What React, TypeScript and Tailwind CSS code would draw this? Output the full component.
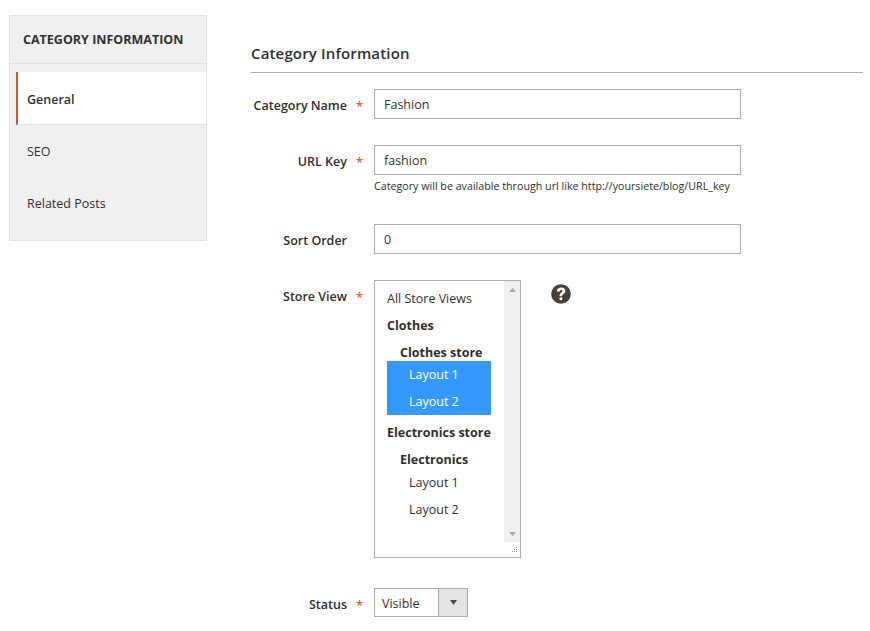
import React from 'react'

const font = { fontFamily: '"Open Sans", sans-serif' }

const FieldLabel = ({ text, required = true }: { text: string; required?: boolean }) => (
    <div className="flex w-[123px] shrink-0 justify-end pt-[4px] text-[12.5px] font-semibold leading-[18px] whitespace-nowrap text-[#303030]">
        <span>{text}</span>
        <span className={`w-[27px] pl-[9px] text-[13px] ${required ? 'text-[#e0633a]' : 'text-transparent'}`}>*</span>
    </div>
)

const TextInput = ({ value }: { value: string }) => (
    <div className="flex h-[30px] w-[367px] items-center border border-[#adadad] pt-[2px] pl-[9px] text-[12.5px] text-[#303030]">
        {value}
    </div>
)

const Group = ({ text, indent }: { text: string; indent: string }) => (
    <div className={`h-[27px] text-[12.5px] font-bold leading-[27px] whitespace-nowrap text-[#303030] ${indent}`}>{text}</div>
)

const Sidebar = () => (
    <aside className="flex h-[226px] w-[198px] shrink-0 flex-col border border-[#e3e3e3] bg-[#f0f0f0]">
        <div className="flex h-[48px] shrink-0 items-center border-b border-[#e3e3e3] pt-[2px] pl-[13px] text-[12.5px] font-bold whitespace-nowrap text-[#303030]">
            CATEGORY INFORMATION
        </div>
        <div className="mt-[8px] ml-[6px] flex h-[53px] shrink-0 items-center border-l-[2px] border-b border-l-[#d2581f] border-b-[#e3e3e3] bg-white pt-[4px] pl-[9px] text-[12.5px] font-semibold text-[#303030]">
            General
        </div>
        <div className="flex h-[52px] shrink-0 items-center pt-[2px] pl-[17px] text-[12.5px] text-[#303030]">SEO</div>
        <div className="flex h-[52px] shrink-0 items-center pt-[2px] pl-[17px] text-[12.5px] text-[#303030]">Related Posts</div>
    </aside>
)

const StoreList = () => (
    <div className="relative flex h-[278px] w-[147px] border border-[#adadad] bg-white">
        <div className="w-[129px] pt-[4px] pl-[12px] text-[12.5px] text-[#303030]">
            <div className="h-[27px] leading-[27px]">All Store Views</div>
            <Group text="Clothes" indent="" />
            <div className="h-[22px]">
                <Group text="Clothes store" indent="pl-[13px]" />
            </div>
            <div className="h-[54px] w-[104px] bg-[#3399ff] pl-[22px] leading-[27px] text-white">
                <div>Layout 1</div>
                <div>Layout 2</div>
            </div>
            <div className="h-[4px]" />
            <Group text="Electronics store" indent="" />
            <div className="h-[23px]">
                <Group text="Electronics" indent="pl-[13px]" />
            </div>
            <div className="pl-[22px] leading-[27px]">
                <div>Layout 1</div>
                <div>Layout 2</div>
            </div>
        </div>
        <div className="flex h-[261px] w-[16px] flex-col items-center justify-between bg-[#f0f0f0] pt-[7px] pb-[6px]">
            <svg width="7" height="4" viewBox="0 0 7 4"><path d="M3.5 0L7 4H0z" fill="#a8a8a8" /></svg>
            <svg width="7" height="4" viewBox="0 0 7 4"><path d="M3.5 4L7 0H0z" fill="#a8a8a8" /></svg>
        </div>
        <svg className="absolute right-[1px] bottom-[1px]" width="10" height="10" viewBox="0 0 10 10">
            <g fill="#9a9a9a">
                <rect x="7" y="1" width="1" height="1" />
                <rect x="5" y="3" width="1" height="1" />
                <rect x="7" y="3" width="1" height="1" />
                <rect x="3" y="5" width="1" height="1" />
                <rect x="5" y="5" width="1" height="1" />
                <rect x="7" y="5" width="1" height="1" />
            </g>
        </svg>
    </div>
)

const App = () => {
    return (
        <div className="flex h-[631px] w-[870px] overflow-hidden bg-white pt-[15px] pl-[9px]" style={font}>
            <Sidebar />
            <main className="ml-[44px] w-[612px]">
                <h2 className="mt-[28px] h-[30px] border-b border-[#adadad] text-[15px] leading-[20px] font-semibold tracking-[0.15px] text-[#303030]">
                    Category Information
                </h2>
                <div className="mt-[16px] flex items-center">
                    <FieldLabel text="Category Name" />
                    <TextInput value="Fashion" />
                </div>
                <div className="mt-[26px] flex items-center">
                    <FieldLabel text="URL Key" />
                    <TextInput value="fashion" />
                </div>
                <p className="mt-[3px] ml-[123px] h-[16px] text-[10.7px] leading-[16px] whitespace-nowrap text-[#303030]">
                    Category will be available through url like http://yoursiete/blog/URL_key
                </p>
                <div className="mt-[30px] flex items-center">
                    <FieldLabel text="Sort Order" required={false} />
                    <TextInput value="0" />
                </div>
                <div className="mt-[26px] flex items-start">
                    <div className="pt-[4px]">
                        <FieldLabel text="Store View" />
                    </div>
                    <StoreList />
                    <svg className="mt-[4px] ml-[30px]" width="20" height="20" viewBox="0 0 20 20">
                        <circle cx="10" cy="10" r="9.8" fill="#4a3f39" />
                        <path d="M5.9 7.4C6 4.9 7.7 3.4 10.2 3.4c2.5 0 4.2 1.5 4.2 3.5 0 1.5-.8 2.4-2 3.2-1 .6-1.2 1-1.2 1.9v.3H8.6v-.6c0-1.5.5-2.2 1.6-3 .9-.6 1.3-1 1.3-1.6 0-.7-.6-1.2-1.3-1.2-.9 0-1.5.6-1.6 1.5z" fill="#fff" />
                        <rect x="8.6" y="13.4" width="2.6" height="2.7" fill="#fff" />
                    </svg>
                </div>
                <div className="mt-[30px] flex items-center">
                    <FieldLabel text="Status" />
                    <div className="flex h-[29px] w-[94px] items-stretch border border-[#adadad] text-[12.5px] text-[#303030]">
                        <div className="flex w-[63px] items-center pt-[4px] pl-[7px]">Visible</div>
                        <div className="flex flex-1 items-center justify-center border-l border-[#adadad] bg-[#e3e3e3]">
                            <svg width="7" height="5" viewBox="0 0 7 5"><path d="M0 0H7L3.5 5z" fill="#514943" /></svg>
                        </div>
                    </div>
                </div>
            </main>
        </div>
    )
}

export default App
